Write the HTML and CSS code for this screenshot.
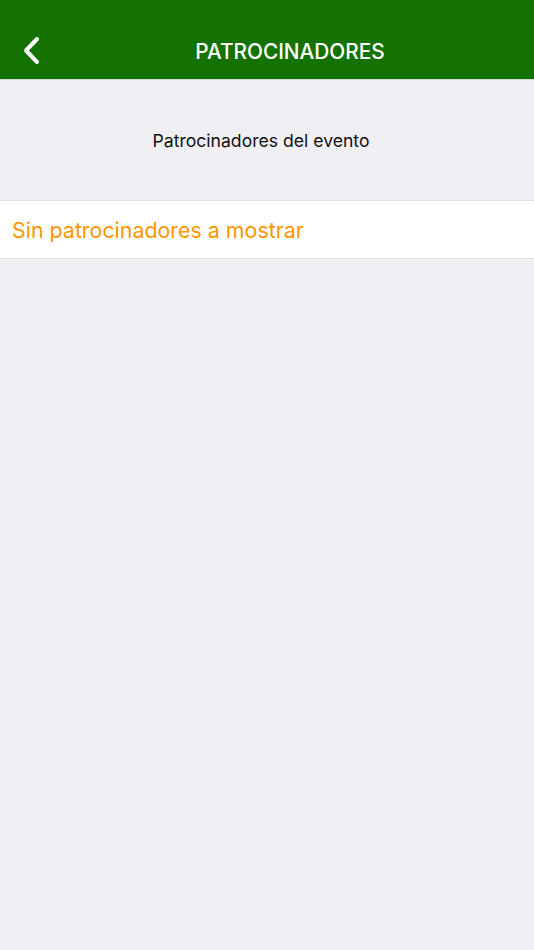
FILE: index.html
```html
<!DOCTYPE html>
<html lang="es">
<head>
    <meta charset="UTF-8">
    <meta name="viewport" content="width=device-width, initial-scale=1.0">
    <title>Patrocinadores</title>
    <link rel="stylesheet" href="styles.css">
</head>
<body>

    <div class="navbar">
        <div class="navBack">
            <svg width="20" height="30" viewBox="0 0 20 30">
                <path d="M16 3 L5 14.5 L16 26" fill="none" stroke="#fff" stroke-width="4" stroke-linecap="round" stroke-linejoin="round"/>
            </svg>
        </div>
        <div class="navTitle">PATROCINADORES</div>
    </div>

    <div class="sectionHeader">Patrocinadores del evento</div>

    <div class="listGroup">
        <div class="listRow">Sin patrocinadores a mostrar</div>
    </div>

</body>
</html>
```

FILE: styles.css
```css
body {
    font-family: Inter, "Liberation Sans", Arial, sans-serif;
    background-color: #efeff4;
    margin: 0;
}
.navbar {
    height: 80px;
    background-color: #147300;
    border-bottom: 1px solid #d8d8d8;
    display: flex;
    align-items: center;
    padding-top: 22px;
    box-sizing: border-box;
}
.navBack {
    width: 60px;
    padding-left: 21px;
    box-sizing: border-box;
    display: flex;
    align-items: center;
}
.navTitle {
    flex: 1;
    text-align: center;
    color: #fff;
    font-size: 20.8px;
    font-weight: 500;
    padding-right: 14px;
    padding-top: 2px;
}
.sectionHeader {
    height: 120px;
    display: flex;
    align-items: center;
    justify-content: center;
    font-size: 17.6px;
    color: #111;
    padding-right: 12px;
}
.listGroup {
    background-color: #fff;
    border-top: 1px solid #dcdce0;
    border-bottom: 1px solid #dcdce0;
}
.listRow {
    height: 57px;
    display: flex;
    align-items: center;
    padding-left: 12px;
    font-size: 21.4px;
    color: #ff9500;
}
```
